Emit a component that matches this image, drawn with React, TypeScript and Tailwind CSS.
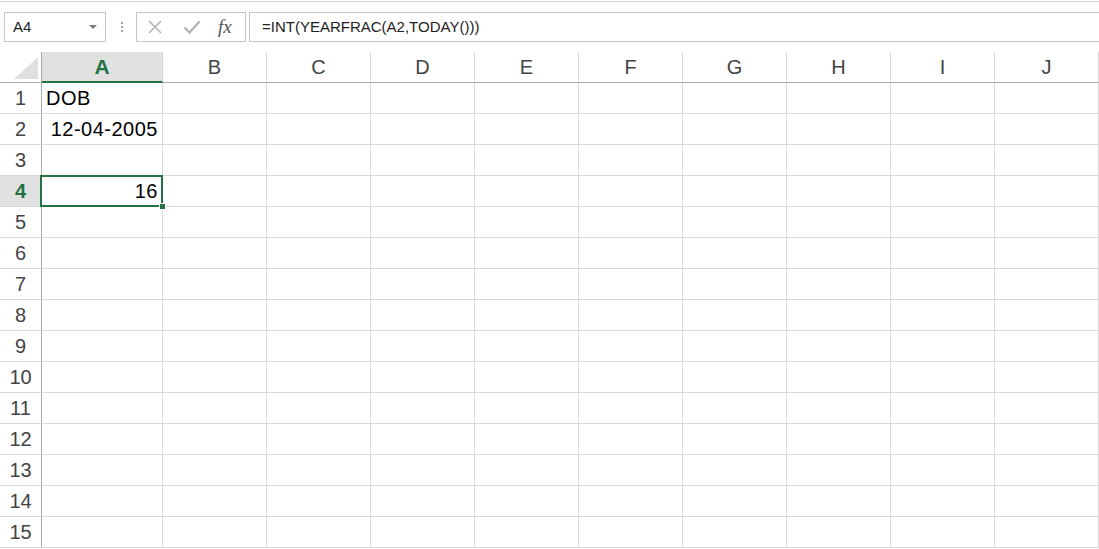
import React from "react";

const COLS = ["A", "B", "C", "D", "E", "F", "G", "H", "I", "J"];
const ROWS = Array.from({ length: 15 }, (_, i) => i + 1);

const cellValues: Record<string, { text: string; align: "left" | "right" }> = {
  A1: { text: "DOB", align: "left" },
  A2: { text: "12-04-2005", align: "right" },
  A4: { text: "16", align: "right" },
};

const font = { fontFamily: '"Liberation Sans", Arial, sans-serif' };

function FormulaBar() {
  return (
    <div className="relative h-[51px] border-t border-[#d5d5d5] mt-px bg-white">
      <div className="flex items-start pt-[10px]">
        {/* name box */}
        <div className="ml-1 flex h-[30px] w-[102px] items-center justify-between border border-[#c6c6c6] bg-white pl-[8px] pr-[8px]">
          <span className="text-[15px] text-[#222]">A4</span>
          <span className="h-0 w-0 border-x-[4px] border-t-[4px] border-x-transparent border-t-[#7a7a7a]" />
        </div>
        {/* dots */}
        <div className="ml-[15px] mr-[13px] flex h-[30px] flex-col items-center justify-center gap-[2px]">
          <span className="h-[2px] w-[2px] bg-[#a0a0a0]" />
          <span className="h-[2px] w-[2px] bg-[#a0a0a0]" />
          <span className="h-[2px] w-[2px] bg-[#a0a0a0]" />
        </div>
        {/* cancel / enter / fx */}
        <div className="flex h-[30px] w-[110px] items-center border border-[#c6c6c6] bg-white">
          <svg width="16" height="16" viewBox="0 0 16 16" className="ml-[10px]">
            <path d="M2 2 L14 14 M14 2 L2 14" stroke="#b3b3b3" strokeWidth="1.6" fill="none" />
          </svg>
          <svg width="18" height="16" viewBox="0 0 18 16" className="ml-[20px]">
            <path d="M1.5 8.5 L6.5 13.5 L16.5 2.5" stroke="#b3b3b3" strokeWidth="2.4" fill="none" />
          </svg>
          <span
            className="ml-[17px] text-[19px] italic text-[#555]"
            style={{ fontFamily: '"Liberation Serif", "Times New Roman", serif' }}
          >
            fx
          </span>
        </div>
        {/* formula input */}
        <div className="ml-[3px] flex h-[30px] flex-1 items-center border-y border-l border-[#c6c6c6] bg-white pl-[12px]">
          <span className="text-[15px] text-[#222]">=INT(YEARFRAC(A2,TODAY()))</span>
        </div>
      </div>
    </div>
  );
}

function Grid() {
  return (
    <div className="grid grid-cols-[42px_121px_repeat(9,104px)] grid-rows-[31px_repeat(15,31px)]">
      {/* corner */}
      <div className="relative border-b border-r border-[#ababab] bg-white">
        <svg width="24" height="22" viewBox="0 0 24 22" className="absolute bottom-[3px] right-[3px]">
          <polygon points="24,0 24,22 0,22" fill="#dfdfdf" />
        </svg>
      </div>
      {COLS.map((c) => {
        const active = c === "A";
        return (
          <div
            key={c}
            className={
              active
                ? "flex items-center justify-center border-b-2 border-r border-b-[#217346] border-r-[#d4d4d4] bg-[#e1e1e1] text-[21px] font-bold text-[#217346]"
                : "flex items-center justify-center border-b border-r border-b-[#ababab] border-r-[#dadada] bg-white text-[20px] text-[#444]"
            }
          >
            {c}
          </div>
        );
      })}
      {ROWS.map((r) => (
        <React.Fragment key={r}>
          <div
            className={
              r === 4
                ? "flex items-center justify-center border-b border-r border-b-[#d4d4d4] border-r-[#ababab] bg-[#e1e1e1] text-[20px] font-bold text-[#217346]"
                : "flex items-center justify-center border-b border-r border-b-[#dadada] border-r-[#ababab] bg-white text-[20px] text-[#444]"
            }
          >
            {r}
          </div>
          {COLS.map((c) => {
            const id = `${c}${r}`;
            const v = cellValues[id];
            const selected = id === "A4";
            return (
              <div
                key={id}
                className={`relative flex items-center border-b border-r border-[#dadada] bg-white ${
                  v?.align === "right" ? "justify-end pr-[4px]" : "justify-start pl-[4px]"
                } ${selected ? "z-10" : ""}`}
              >
                {v && <span className="text-[20px] tracking-[0.5px] text-black">{v.text}</span>}
                {selected && (
                  <>
                    <div className="pointer-events-none absolute -left-[2px] -top-px bottom-[-1px] right-[-1px] border-2 border-[#217346]" />
                    <div className="absolute -bottom-[4px] -right-[4px] h-[7px] w-[7px] border border-white bg-[#217346]" />
                  </>
                )}
              </div>
            );
          })}
        </React.Fragment>
      ))}
    </div>
  );
}

export default function App() {
  return (
    <div className="h-[549px] w-[1099px] overflow-hidden bg-white" style={font}>
      <FormulaBar />
      <Grid />
    </div>
  );
}
